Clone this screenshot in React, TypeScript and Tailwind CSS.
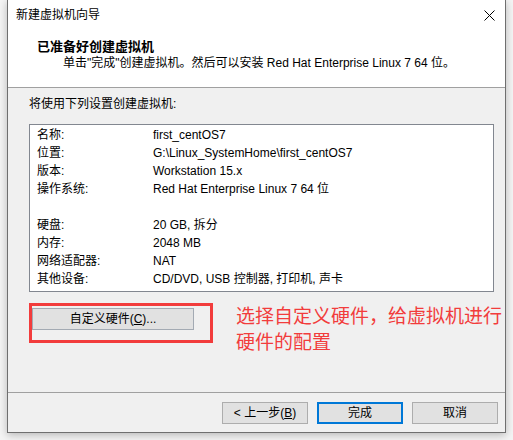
import React from "react";

const FONT = { fontFamily: '"Liberation Sans", "Noto Sans CJK SC", sans-serif' };

const rows: [string, string][] = [
  ["名称:", "first_centOS7"],
  ["位置:", "G:\\Linux_SystemHome\\first_centOS7"],
  ["版本:", "Workstation 15.x"],
  ["操作系统:", "Red Hat Enterprise Linux 7 64 位"],
  ["", ""],
  ["硬盘:", "20 GB, 拆分"],
  ["内存:", "2048 MB"],
  ["网络适配器:", "NAT"],
  ["其他设备:", "CD/DVD, USB 控制器, 打印机, 声卡"],
];

export default function App() {
  return (
    <div className="w-[513px] h-[440px] bg-[#f4f4f4] overflow-hidden text-black" style={FONT}>
      <div className="ml-[7px] w-[499px] h-[433px] border-l border-r border-b border-[#6f6f6f] bg-[#f0f0f0] flex flex-col shadow-[0_2px_8px_rgba(0,0,0,0.25)]">
        {/* title bar + header */}
        <div className="bg-white h-[87px] flex flex-col">
          <div className="h-[30px] flex items-center justify-between pl-[8px] pr-[9px]">
            <span className="text-[12px] leading-[16px]">新建虚拟机向导</span>
            <svg width="11" height="11" viewBox="0 0 11 11" className="mr-[1px]">
              <path d="M0.5 0.5 L10.5 10.5 M10.5 0.5 L0.5 10.5" stroke="#000" strokeWidth="1" />
            </svg>
          </div>
          <div className="pl-[29px] pt-[9px]">
            <div className="text-[13px] leading-[16px] font-bold">已准备好创建虚拟机</div>
            <div className="pl-[26px] text-[12px] leading-[16px]">
              单击"完成"创建虚拟机。然后可以安装 Red Hat Enterprise Linux 7 64 位。
            </div>
          </div>
        </div>
        <div className="h-px bg-[#a0a0a0]" />
        {/* body */}
        <div className="h-[304px] flex flex-col pl-[21px]">
          <div className="pt-[8px] text-[12px] leading-[16px]">将使用下列设置创建虚拟机:</div>
          <div className="mt-[12px] w-[465px] h-[168px] border border-[#828790] bg-white pt-[1px]">
            {rows.map(([k, v], i) => (
              <div key={i} className="h-[18px] flex items-center text-[12px] leading-[16px]">
                <span className="w-[123px] pl-[7px] shrink-0">{k}</span>
                <span>{v}</span>
              </div>
            ))}
          </div>
          <div className="mt-[11px] flex">
            <div className="w-[184px] h-[40px] border-[3px] border-[#f23c3c] pt-[2px]">
              <div className="w-[162px] h-[22px] border border-[#a3aab3] bg-[#e1e1e1] flex items-center justify-center text-[12px] leading-[16px]">
                <span>
                  自定义硬件(<span className="underline">C</span>)...
                </span>
              </div>
            </div>
            <div className="ml-[23px] text-[19px] leading-[26px] text-[#f23c3c] -mt-[1px]" style={{ fontFamily: '"Noto Sans CJK SC", sans-serif' }}>
              选择自定义硬件，给虚拟机进行
              <br />
              硬件的配置
            </div>
          </div>
        </div>
        <div className="h-px bg-[#a0a0a0]" />
        {/* footer */}
        <div className="flex-1 flex justify-end gap-[9px] pr-[7px] pt-[9px]">
          <div className="w-[86px] h-[22px] border border-[#adadad] bg-[#e1e1e1] flex items-center justify-center text-[12px] leading-[16px]">
            <span>
              &lt; 上一步(<span className="underline">B</span>)
            </span>
          </div>
          <div className="w-[86px] h-[22px] border-2 border-[#0078d7] bg-[#e1e1e1] flex items-center justify-center text-[12px] leading-[16px]">
            完成
          </div>
          <div className="w-[86px] h-[22px] border border-[#adadad] bg-[#e1e1e1] flex items-center justify-center text-[12px] leading-[16px]">
            取消
          </div>
        </div>
      </div>
    </div>
  );
}
